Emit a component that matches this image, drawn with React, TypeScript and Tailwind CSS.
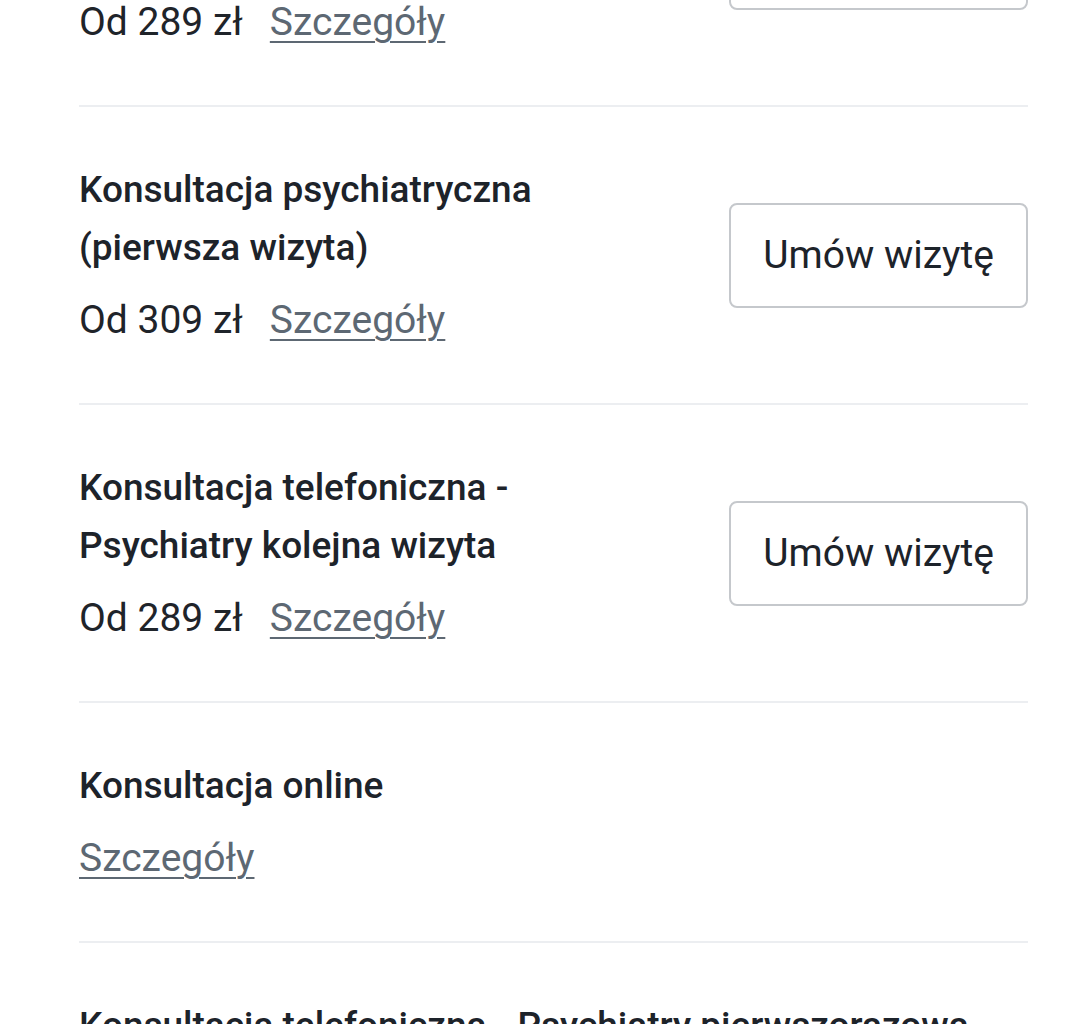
import React from "react";

type Item = {
  title: string;
  price?: string;
  button: boolean;
};

const items: Item[] = [
  { title: "Konsultacja telefoniczna - Psychiatry kolejna wizyta", price: "Od 289 zł", button: true },
  { title: "Konsultacja psychiatryczna (pierwsza wizyta)", price: "Od 309 zł", button: true },
  { title: "Konsultacja telefoniczna - Psychiatry kolejna wizyta", price: "Od 289 zł", button: true },
  { title: "Konsultacja online", button: false },
  { title: "Konsultacja telefoniczna - Psychiatry pierwszorazowa", price: "Od 309 zł", button: false },
];

function Row({ item }: { item: Item }) {
  return (
    <div className="flex items-center justify-between border-b-2 border-[#eceef1] py-[54px]">
      <div className="flex min-w-0 flex-col">
        <h3
          className={
            "text-[37px] leading-[58px] font-medium text-[#1d232a] " +
            (item.button ? "max-w-[560px]" : "whitespace-nowrap")
          }
        >
          {item.title}
        </h3>
        <div className="mt-[14px] flex items-center text-[39px] leading-[58px]">
          {item.price && <span className="mr-[27px] text-[#1f242a]">{item.price}</span>}
          <a
            href="#"
            className="text-[#5d6873] underline decoration-2 underline-offset-[6px]"
          >
            Szczegóły
          </a>
        </div>
      </div>
      {item.button && (
        <button className="flex h-[105px] shrink-0 items-center justify-center whitespace-nowrap rounded-[8px] border-2 border-[#c5c8cc] bg-white px-[32px] text-[39px] text-[#1d232a]">
          Umów wizytę
        </button>
      )}
    </div>
  );
}

export default function App() {
  return (
    <div
      className="h-[1024px] w-[1080px] overflow-hidden bg-white"
      style={{ fontFamily: "Roboto, 'Noto Sans', sans-serif" }}
    >
      <div className="ml-[79px] mt-[-191px] w-[949px]">
        {items.map((it, i) => (
          <Row key={i} item={it} />
        ))}
      </div>
    </div>
  );
}
